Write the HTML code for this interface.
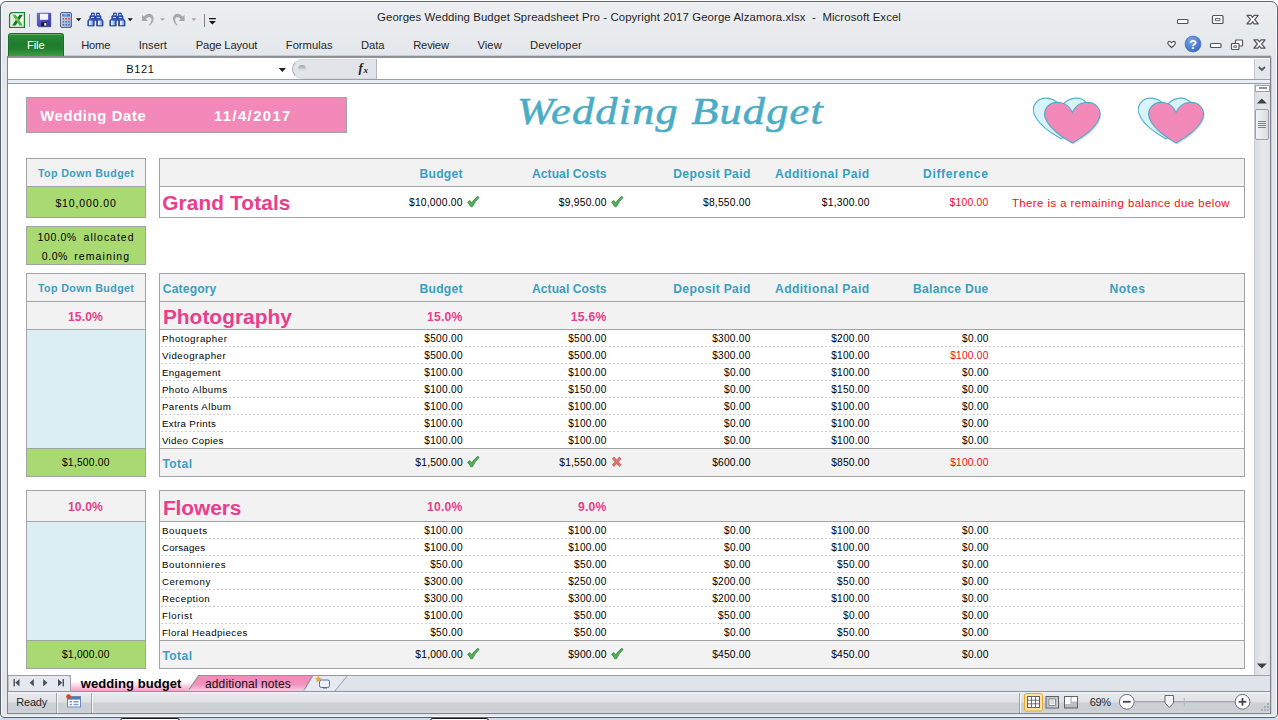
<!DOCTYPE html>
<html lang="en"><head><meta charset="utf-8"><title>Georges Wedding Budget Spreadsheet Pro - Microsoft Excel</title>
<style>
html,body{margin:0;padding:0;background:#fff;}
body{width:1278px;height:720px;position:relative;overflow:hidden;font-family:"Liberation Sans",sans-serif;}
#app div,#app svg.a,#app span.t{position:absolute;}
span.t{white-space:nowrap;display:block;}
</style></head>
<body><div id="app">
<div style="left:0px;top:1px;width:1278px;height:717px;background:linear-gradient(#eceef1 0px,#e8ebee 30px,#e3e6ea 56px,#e3e6ea 100%);border:1px solid #59626c;border-radius:6px 7px 4px 4px;box-sizing:border-box;box-shadow:inset 0 0 0 1px #f7f8fa;"></div>
<div style="left:7px;top:56px;width:1264px;height:658px;box-sizing:border-box;border:1px solid #7f848c;border-top:none;background:#fff;"></div>
<div style="left:1271px;top:57px;width:1px;height:657px;background:#c9ccd1;"></div>
<div style="left:0px;top:718px;width:1278px;height:2px;background:#cddbee;"></div>
<div style="left:8px;top:55px;width:1263px;height:1px;background:#c9ccd1;"></div>
<div style="left:8px;top:56px;width:1263px;height:2px;background:linear-gradient(#8a8e94,#92969c);"></div>
<span class="t" style="left:377.00px;top:11px;font:normal normal 11.4px/12px 'Liberation Sans', sans-serif;color:#1e1e1e;letter-spacing:0.092px;white-space:pre;">Georges Wedding Budget Spreadsheet Pro - Copyright 2017 George Alzamora.xlsx  -  Microsoft Excel</span>
<svg class="a" style="left:1160px;top:8px" width="112" height="46" viewBox="1160 8 112 46">
<g fill="#fff" stroke="#50555c" stroke-width="1.2" stroke-linejoin="round">
<rect x="1177.5" y="19.5" width="10.5" height="4" rx="1"/>
<rect x="1212.5" y="15.5" width="10.5" height="8" rx="1"/><rect x="1215.5" y="18.5" width="4.5" height="2.2" stroke-width=".9"/>
<path d="M1247 15.300h4l1.600 2.200 1.600-2.200h4l-3.500 4.300 3.500 4.300h-4l-1.600-2.200-1.600 2.200h-4l3.500-4.300z"/>
<path d="M1168.100 42q1.900-1.400 3.500.8 1.600-2.200 3.500-.8.900 1.300-.5 2.700l-3 2.800-3-2.800q-1.400-1.400-.5-2.700z" stroke-width="1.200"/>
<rect x="1210.500" y="43.500" width="10.500" height="4" rx="1"/>
<rect x="1235.500" y="40" width="7" height="6" rx=".8"/><rect x="1231.500" y="43.500" width="7.500" height="6" rx=".8"/><rect x="1233.800" y="45.800" width="2.800" height="1.600" stroke-width=".8"/>
<path d="M1253.900 39.800h4l1.600 2.200 1.600-2.200h4l-3.500 4.200 3.500 4.200h-4l-1.600-2.200-1.600 2.200h-4l3.500-4.200z"/>
</g>
<defs><radialGradient id="hg" cx=".4" cy=".3" r=".8"><stop offset="0" stop-color="#7fa6e6"/><stop offset="1" stop-color="#2f62c0"/></radialGradient></defs>
<circle cx="1193" cy="44" r="8" fill="url(#hg)" stroke="#3c6cc4" stroke-width=".6"/>
</svg>
<span class="t" style="left:1189.18px;top:38px;font:normal bold 12.5px/14px 'Liberation Sans', sans-serif;color:#fff;">?</span>
<svg class="a" style="left:8px;top:10px" width="212" height="20" viewBox="8 10 212 20">
<!-- excel icon -->
<path d="M12.500 12.600H24.400V27.400H9.600V15.500Q9.600 12.600 12.500 12.600z" fill="#fafdf9" stroke="#1f7f2b" stroke-width="1.300"/>
<path d="M10.600 16v10.400h12.800z" fill="#cfeecd" opacity=".7"/>
<path d="M19.500 14.700h3.400L15.500 25.500h-3.400z" fill="#14732f"/>
<path d="M12.300 14.700h3.500L22.900 25.500h-3.500z" fill="#4cb748"/>
<path d="M16.300 18.600l1.300 1.900" stroke="#b5d334" stroke-width="1.500"/>
<rect x="29" y="14" width="1" height="13" fill="#9a9ea5"/>
<!-- save -->
<defs><linearGradient id="sv" x1="0" y1="0" x2="1" y2="1"><stop offset="0" stop-color="#7474e0"/><stop offset=".5" stop-color="#4a4cc0"/><stop offset="1" stop-color="#2f2f94"/></linearGradient></defs>
<path d="M37.300 13.200H50.800V26.800H38.600L37.300 25.500z" fill="url(#sv)" stroke="#35359c" stroke-width=".6"/>
<rect x="40" y="13.800" width="8.200" height="6" fill="#f4f6fc"/>
<rect x="41.300" y="22.300" width="5.600" height="3.900" fill="#15152a"/><rect x="44.200" y="23" width="2.200" height="2.700" fill="#dfe6f5"/>
<!-- calculator -->
<defs><linearGradient id="cg" x1="0" y1="0" x2="1" y2="1"><stop offset="0" stop-color="#dbe9fa"/><stop offset="1" stop-color="#98a7bf"/></linearGradient></defs>
<rect x="60.500" y="12.500" width="11" height="15" rx="1.500" fill="url(#cg)" stroke="#55647f" stroke-width="1"/>
<rect x="62" y="13.800" width="8" height="2.700" fill="#3f79dc"/><rect x="63.500" y="14.500" width="4" height=".8" fill="#cfe2ff"/>
<g fill="#d8453a"><rect x="62.500" y="17.900" width="1.700" height="1.700"/><rect x="65.300" y="17.900" width="1.700" height="1.700"/><rect x="68.100" y="17.900" width="1.700" height="1.700"/></g>
<g fill="#4f79c6"><rect x="62.500" y="20.900" width="1.700" height="1.700"/><rect x="65.300" y="20.900" width="1.700" height="1.700"/><rect x="68.100" y="20.900" width="1.700" height="1.700"/><rect x="62.500" y="23.900" width="1.700" height="1.700"/><rect x="65.300" y="23.900" width="1.700" height="1.700"/><rect x="68.100" y="23.900" width="1.700" height="1.700"/></g>
<path d="M76 18.300h5.200l-2.600 3z" fill="#111"/>
<!-- binoculars 1 -->
<defs><linearGradient id="bg1" x1="0" y1="0" x2="1" y2="0"><stop offset="0" stop-color="#fff"/><stop offset="1" stop-color="#7f9be0"/></linearGradient></defs>
<g id="bino"><path d="M91.500 13h2.900v2.300l.9 .8v3.300l-1.100 .9v5.700h-6.400v-5.500l2-1.900v-2.600l1.700-1z" fill="#3156b8" stroke="#1b3588" stroke-width=".7"/>
<path d="M99.300 13h-2.900v2.300l-.9 .8v3.300l1.100 .9v5.700h6.400v-5.500l-2-1.900v-2.600l-1.700-1z" fill="#3156b8" stroke="#1b3588" stroke-width=".7"/>
<rect x="94" y="18.300" width="3" height="2.400" fill="#2a49a8"/>
<rect x="89" y="20.600" width="3.900" height="4.600" fill="url(#bg1)"/><rect x="98" y="20.600" width="3.900" height="4.600" fill="url(#bg1)"/>
<rect x="92.200" y="14" width="1.500" height="1.300" fill="#e3eaff"/><rect x="97.200" y="14" width="1.500" height="1.300" fill="#e3eaff"/>
<rect x="91" y="17" width="3" height=".9" fill="#c9d6fb"/><rect x="96.800" y="17" width="3" height=".9" fill="#c9d6fb"/></g>
<use href="#bino" x="22"/>
<path d="M127.600 18.300h5.200l-2.600 3z" fill="#111"/>
<!-- undo / redo (disabled) -->
<path d="M142 14.700V21h5.800l-1.900-1.900c1.600-2.100 4.600-2.600 5.400-.6.700 2-.3 4.500-2.500 6.800l1 .3c3.200-2.600 4.500-6.100 3.500-8.800-1.300-3.600-6.300-4.200-9.300 0z" fill="#a4a8ae"/>
<path d="M160 18.300h5l-2.500 2.800z" fill="#a4a8ae"/>
<path transform="translate(326.600 0) scale(-1 1)" d="M142 14.700V21h5.800l-1.900-1.900c1.600-2.100 4.600-2.600 5.400-.6.700 2-.3 4.500-2.500 6.800l1 .3c3.200-2.600 4.500-6.100 3.500-8.800-1.300-3.600-6.300-4.200-9.300 0z" fill="#a4a8ae"/>
<path d="M191.300 18.300h5l-2.500 2.800z" fill="#a4a8ae"/>
<rect x="204" y="14" width="1" height="13" fill="#7f848c"/>
<rect x="209" y="18" width="6.800" height="1.300" fill="#111"/><path d="M209 21h6.800l-3.400 3.400z" fill="#111"/>
</svg>
<div style="left:8px;top:33px;width:56px;height:23px;background:linear-gradient(#2e8b3a 0%,#1f7a2c 45%,#238232 70%,#3f9d3f 100%);border:1px solid #1b6e27;border-bottom:none;border-radius:3px 3px 0 0;box-sizing:border-box;box-shadow:inset 0 1px 0 #5fb066;"></div>
<span class="t" style="left:27.00px;top:39px;font:normal normal 11.2px/12px 'Liberation Sans', sans-serif;color:#fff;letter-spacing:-0.108px;">File</span>
<span class="t" style="left:81.20px;top:39px;font:normal normal 11.2px/12px 'Liberation Sans', sans-serif;color:#262626;letter-spacing:-0.186px;">Home</span>
<span class="t" style="left:138.70px;top:39px;font:normal normal 11.2px/12px 'Liberation Sans', sans-serif;color:#262626;letter-spacing:0.053px;">Insert</span>
<span class="t" style="left:195.70px;top:39px;font:normal normal 11.2px/12px 'Liberation Sans', sans-serif;color:#262626;letter-spacing:-0.112px;">Page Layout</span>
<span class="t" style="left:285.80px;top:39px;font:normal normal 11.2px/12px 'Liberation Sans', sans-serif;color:#262626;letter-spacing:0.009px;">Formulas</span>
<span class="t" style="left:361.00px;top:39px;font:normal normal 11.2px/12px 'Liberation Sans', sans-serif;color:#262626;letter-spacing:-0.035px;">Data</span>
<span class="t" style="left:413.20px;top:39px;font:normal normal 11.2px/12px 'Liberation Sans', sans-serif;color:#262626;letter-spacing:-0.181px;">Review</span>
<span class="t" style="left:477.50px;top:39px;font:normal normal 11.2px/12px 'Liberation Sans', sans-serif;color:#262626;letter-spacing:0.063px;">View</span>
<span class="t" style="left:530.00px;top:39px;font:normal normal 11.2px/12px 'Liberation Sans', sans-serif;color:#262626;letter-spacing:0.089px;">Developer</span>
<div style="left:8px;top:58px;width:1246px;height:21px;background:#fff;"></div>
<div style="left:8px;top:79px;width:1262px;height:1px;background:#9a9ea6;"></div>
<div style="left:8px;top:80px;width:1262px;height:3px;background:#e9edf8;"></div>
<div style="left:8px;top:83px;width:1262px;height:1px;background:#9a9ea6;"></div>
<span class="t" style="left:126.30px;top:63px;font:normal normal 11px/12px 'Liberation Sans', sans-serif;color:#111;letter-spacing:0.624px;">B121</span>
<svg class="a" style="left:277px;top:66px" width="10" height="8"><path d="M1.700 2h7.200l-3.600 4z" fill="#222"/></svg>
<div style="left:292px;top:59px;width:85px;height:20px;background:#e1e4e9;border-radius:10px 0 0 10px;border:1px solid #a9adb4;border-right:none;border-top-color:#d5d8dd;border-bottom-color:#d5d8dd;box-sizing:border-box;"></div>
<div style="left:297.5px;top:64.8px;width:8px;height:8px;border-radius:50%;background:linear-gradient(#9a9da3,#d4d6da 55%,#f0f1f3);"></div>
<div style="left:376px;top:59px;width:1px;height:20px;background:#b4b8be;"></div>
<span class="t" style="left:358.50px;top:60px;font:italic bold 13px/15px 'Liberation Serif', serif;color:#222;">f</span>
<span class="t" style="left:363.50px;top:65px;font:italic bold 9px/10px 'Liberation Serif', serif;color:#222;">x</span>
<div style="left:1254px;top:59px;width:16px;height:20px;background:#e3e6ea;border-left:1px solid #c3c7cd;box-sizing:border-box;"></div>
<svg class="a" style="left:1256px;top:63px" width="12" height="12"><path d="M2.800 4l3.100 3 3.100-3" fill="none" stroke="#555a61" stroke-width="1.800"/></svg>
<div style="left:1254px;top:84px;width:16px;height:591px;background:linear-gradient(90deg,#d9dce1,#e6e8ec 50%,#dfe2e6);border-left:1px solid #c8ccd2;box-sizing:border-box;"></div>
<div style="left:1255px;top:85px;width:15px;height:7px;background:#fdfdfe;border:1px solid #9da2aa;box-sizing:border-box;"></div>
<div style="left:1259px;top:87px;width:8px;height:1.5px;background:#8f949c;"></div>
<svg class="a" style="left:1255px;top:96px" width="14" height="10"><path d="M1.800 7.400l5-5 5 5z" fill="#3d4148"/></svg>
<div style="left:1255px;top:109px;width:14px;height:31px;background:linear-gradient(90deg,#f3f4f6,#e3e5e9 60%,#d9dce1);border:1px solid #9a9fa7;border-radius:2px;box-sizing:border-box;"></div>
<div style="left:1258px;top:121px;width:8px;height:1px;background:#7d828a;"></div>
<div style="left:1258px;top:123px;width:8px;height:1px;background:#7d828a;"></div>
<div style="left:1258px;top:125px;width:8px;height:1px;background:#7d828a;"></div>
<div style="left:1258px;top:127px;width:8px;height:1px;background:#7d828a;"></div>
<svg class="a" style="left:1255px;top:661px" width="14" height="10"><path d="M1.800 2.600l5 5 5-5z" fill="#3d4148"/></svg>
<div style="left:8px;top:675px;width:1262px;height:17px;background:#dfe3ea;border-top:1px solid #9ca1a9;box-sizing:border-box;"></div>
<svg class="a" style="left:8px;top:674px" width="350" height="18" viewBox="8 674 350 18">
<defs><linearGradient id="pk" x1="0" y1="0" x2="0" y2="1"><stop offset="0" stop-color="#f38bb9"/><stop offset=".55" stop-color="#f590bc"/><stop offset="1" stop-color="#fbd0e2"/></linearGradient>
<linearGradient id="wt" x1="0" y1="0" x2="0" y2="1"><stop offset="0" stop-color="#fff"/><stop offset=".4" stop-color="#fff"/><stop offset="1" stop-color="#f6a0c5"/></linearGradient></defs>
<path d="M8 675.500H68q2.500 0 2.500 2.500V691.500H8z" fill="#e5e8ee" stroke="#9a9fa7" stroke-width="1"/>
<g fill="#4a4f57"><rect x="13.500" y="679" width="1.400" height="7.400"/><path d="M19.500 679v7.400l-4.200-3.700z"/><path d="M33.800 679v7.400l-4.200-3.700z"/><path d="M43.200 679v7.400l4.200-3.700z"/><path d="M58 679v7.400l4.200-3.700z"/><rect x="62.600" y="679" width="1.400" height="7.400"/></g>
<path d="M303.500 691.500l9.500-16h34.500l-13 16z" fill="#e6e9ef" stroke="#8d929a" stroke-width=".9"/>
<path d="M188 691.500l11-16h113.500l-9.500 16z" fill="url(#pk)" stroke="#8d929a" stroke-width=".9"/>
<path d="M71 674.500V691h116.500l11-16.500z" fill="url(#wt)"/>
<path d="M71 675h127.500" stroke="#fff" stroke-width="1.200"/>
<path d="M187.500 691.500l11-16" stroke="#8d929a" stroke-width=".9" fill="none"/>
<path d="M185.500 691.500l2.500-3.500 1.500 3.500z" fill="#c9cdd3"/><path d="M301.500 691.500l2.500-3.500 1.500 3.500z" fill="#c9cdd3"/>
<g><rect x="319.500" y="680" width="10" height="7.500" rx="1.800" fill="#eef3ff" stroke="#4f6db0" stroke-width="1"/><rect x="323" y="687.500" width="4" height="1" fill="#4f6db0"/><path d="M318.500 676.300l.8 1.900 2 .2-1.500 1.400.5 2-1.800-1.100-1.800 1.100.5-2-1.500-1.400 2-.2z" fill="#f6b21a" stroke="#d38f0a" stroke-width=".4"/></g>
</svg>
<span class="t" style="left:80.80px;top:676px;font:normal bold 13px/15px 'Liberation Sans', sans-serif;color:#000;letter-spacing:0.075px;">wedding budget</span>
<span class="t" style="left:205.00px;top:677px;font:normal normal 12px/14px 'Liberation Sans', sans-serif;color:#111;letter-spacing:0.120px;">additional notes</span>
<div style="left:8px;top:691px;width:1262px;height:23px;background:linear-gradient(#f4f5f7 0,#e6e8eb 2px,#dfe2e5 10px,#cdd0d5 11px,#cbced3 18px,#d3d6da 100%);border-top:1px solid #8e939b;border-bottom:1px solid #7e848c;box-sizing:border-box;"></div>
<span class="t" style="left:16.30px;top:696px;font:normal normal 11px/12px 'Liberation Sans', sans-serif;color:#262626;letter-spacing:-0.219px;">Ready</span>
<div style="left:56px;top:693px;width:1px;height:20px;background:#a1a6ae;"></div>
<div style="left:57px;top:693px;width:1px;height:20px;background:#f4f5f7;"></div>
<div style="left:91px;top:693px;width:1px;height:20px;background:#a1a6ae;"></div>
<div style="left:92px;top:693px;width:1px;height:20px;background:#f4f5f7;"></div>
<svg class="a" style="left:65px;top:693px" width="18" height="16" viewBox="65 693 18 16">
<rect x="67.500" y="696.500" width="13" height="10.500" fill="#fff" stroke="#6e86b4" stroke-width="1"/><rect x="68" y="697" width="12" height="2.600" fill="#4f78c4"/>
<g fill="#7f9bd0"><rect x="69.500" y="701" width="2.500" height="1.500"/><rect x="73.500" y="701" width="5" height="1.500"/><rect x="69.500" y="703.800" width="2.500" height="1.500"/><rect x="73.500" y="703.800" width="5" height="1.500"/></g>
<circle cx="68.500" cy="696.500" r="2.300" fill="#d8412f"/></svg>
<div style="left:1019px;top:693px;width:1px;height:20px;background:#a1a6ae;"></div>
<div style="left:1020px;top:693px;width:1px;height:20px;background:#f4f5f7;"></div>
<svg class="a" style="left:1022px;top:692px" width="250" height="22" viewBox="1022 692 250 22">
<rect x="1024.500" y="693.500" width="18" height="17.500" rx="2" fill="#fbe3a0" stroke="#e8a63c" stroke-width="1"/>
<rect x="1027.500" y="696.500" width="12" height="11" fill="#fff" stroke="#5d626a" stroke-width="1"/><path d="M1027.500 700.200h12M1027.500 703.800h12M1031.500 696.500v11M1035.500 696.500v11" stroke="#5d626a" stroke-width=".9"/>
<rect x="1046" y="696.500" width="12.500" height="11.500" fill="#c5c9cf" stroke="#5d626a" stroke-width="1"/><rect x="1049" y="699" width="6.500" height="6.500" fill="#fff" stroke="#5d626a" stroke-width=".7"/><path d="M1050.500 701h3.500M1050.500 703h3.500" stroke="#7b8088" stroke-width=".6"/>
<rect x="1064.500" y="696.500" width="13" height="11.500" fill="#b8bcc3" stroke="#5d626a" stroke-width="1"/><path d="M1065 697h5.300v7h-5.300zM1071.800 697h5.200v4.500h-5.200z" fill="#fff"/>
<circle cx="1126.800" cy="701.800" r="7.400" fill="#fbfbfc" stroke="#6a6f77" stroke-width="1"/><rect x="1123" y="700.900" width="7.600" height="1.800" fill="#41454c"/>
<rect x="1134.500" y="701.300" width="100.500" height="1" fill="#8b9098"/>
<rect x="1183.800" y="698" width="1" height="8" fill="#aeb3ba"/>
<path d="M1165 695.500h8.500v7.500l-4.250 4.500-4.250-4.500z" fill="#f2f3f5" stroke="#62676f" stroke-width="1"/>
<circle cx="1242.500" cy="701.800" r="7.400" fill="#fbfbfc" stroke="#6a6f77" stroke-width="1"/><rect x="1238.700" y="700.900" width="7.600" height="1.800" fill="#41454c"/><rect x="1241.600" y="698" width="1.800" height="7.600" fill="#41454c"/>
<g fill="#a9aeb6"><rect x="1267" y="703" width="2" height="2"/><rect x="1264" y="706" width="2" height="2"/><rect x="1267" y="706" width="2" height="2"/><rect x="1261" y="709" width="2" height="2"/><rect x="1264" y="709" width="2" height="2"/><rect x="1267" y="709" width="2" height="2"/></g>
</svg>
<span class="t" style="left:1089.80px;top:696px;font:normal normal 11px/12px 'Liberation Sans', sans-serif;color:#262626;letter-spacing:-0.444px;">69%</span>
<div style="left:120px;top:718px;width:60px;height:3px;background:#fff;border:1px solid #1a1a1a;border-radius:3px 3px 0 0;box-sizing:border-box;"></div>
<div style="left:430px;top:718px;width:59px;height:3px;background:#fff;border:1px solid #1a1a1a;border-radius:3px 3px 0 0;box-sizing:border-box;"></div>
<div style="left:26px;top:97px;width:321px;height:36px;background:#f389b8;border:1px solid #a3a3a3;box-sizing:border-box;"></div>
<span class="t" style="left:40.20px;top:108px;font:normal bold 14.8px/16px 'Liberation Sans', sans-serif;color:#fff;letter-spacing:0.659px;">Wedding Date</span>
<span class="t" style="left:214.00px;top:108px;font:normal bold 14.8px/16px 'Liberation Sans', sans-serif;color:#fff;letter-spacing:1.409px;">11/4/2017</span>
<span class="t" style="left:516.50px;top:90px;font:italic normal 38.5px/42px 'Liberation Serif', serif;color:#4bacc6;letter-spacing:1.068px;transform:scaleX(1.15);transform-origin:0 0;-webkit-text-stroke:.55px #4bacc6;">Wedding Budget</span>
<svg class="a" style="left:1030px;top:94px" width="74" height="54" viewBox="1030 94 74 54">
<path d="M1062.30 109.45C1073.76 85.53 1118.45 109.45 1062.30 140.20C1006.15 109.45 1050.84 85.53 1062.30 109.45Z" fill="#9aa" opacity=".25"/>
<path d="M1061.10 107.95C1072.56 84.03 1117.25 107.95 1061.10 138.70C1004.95 107.95 1049.64 84.03 1061.10 107.95Z" fill="#d9f3fb" stroke="#55b0d0" stroke-width="1.1"/>
<path d="M1073.50 113.65C1084.96 89.73 1129.65 113.65 1073.50 144.40C1017.35 113.65 1062.04 89.73 1073.50 113.65Z" fill="#889" opacity=".3"/>
<path d="M1072.30 112.15C1083.76 88.23 1128.45 112.15 1072.30 142.90C1016.15 112.15 1060.84 88.23 1072.30 112.15Z" fill="#f389b8" stroke="#4fa9c8" stroke-width="1.1"/>
</svg>
<svg class="a" style="left:1135px;top:94px" width="72" height="54" viewBox="1135 94 72 54">
<path d="M1166.90 109.45C1178.23 85.53 1222.43 109.45 1166.90 140.20C1111.37 109.45 1155.57 85.53 1166.90 109.45Z" fill="#9aa" opacity=".25"/>
<path d="M1165.70 107.95C1177.03 84.03 1221.23 107.95 1165.70 138.70C1110.17 107.95 1154.37 84.03 1165.70 107.95Z" fill="#d9f3fb" stroke="#55b0d0" stroke-width="1.1"/>
<path d="M1177.30 113.65C1188.63 89.73 1232.83 113.65 1177.30 144.40C1121.77 113.65 1165.97 89.73 1177.30 113.65Z" fill="#889" opacity=".3"/>
<path d="M1176.10 112.15C1187.43 88.23 1231.63 112.15 1176.10 142.90C1120.57 112.15 1164.77 88.23 1176.10 112.15Z" fill="#f389b8" stroke="#4fa9c8" stroke-width="1.1"/>
</svg>
<div style="left:26px;top:158px;width:120px;height:29px;background:#f2f2f2;border:1px solid #a3a3a3;box-sizing:border-box;"></div>
<div style="left:26px;top:186px;width:120px;height:32px;background:#a9d971;border:1px solid #a3a3a3;box-sizing:border-box;"></div>
<span class="t" style="left:38.00px;top:167px;font:normal bold 10.7px/12px 'Liberation Sans', sans-serif;color:#389fc1;letter-spacing:0.378px;">Top Down Budget</span>
<span class="t" style="left:55.40px;top:197px;font:normal normal 10.5px/12px 'Liberation Sans', sans-serif;color:#000;letter-spacing:0.864px;">$10,000.00</span>
<div style="left:26px;top:226px;width:120px;height:39px;background:#a9d971;border:1px solid #a3a3a3;box-sizing:border-box;"></div>
<span class="t" style="left:37.60px;top:231px;font:normal normal 10.5px/12px 'Liberation Sans', sans-serif;color:#000;letter-spacing:0.596px;">100.0%</span>
<span class="t" style="left:83.60px;top:231px;font:normal normal 10.5px/12px 'Liberation Sans', sans-serif;color:#000;letter-spacing:0.985px;">allocated</span>
<span class="t" style="left:41.80px;top:250px;font:normal normal 10.5px/12px 'Liberation Sans', sans-serif;color:#000;letter-spacing:0.541px;">0.0%</span>
<span class="t" style="left:74.20px;top:250px;font:normal normal 10.5px/12px 'Liberation Sans', sans-serif;color:#000;letter-spacing:1.099px;">remaining</span>
<div style="left:159px;top:158px;width:1086px;height:29px;background:#f2f2f2;border:1px solid #a3a3a3;box-sizing:border-box;"></div>
<div style="left:159px;top:186px;width:1086px;height:32px;background:#fff;border:1px solid #a3a3a3;box-sizing:border-box;"></div>
<span class="t" style="left:419.50px;top:167px;font:normal bold 12.1px/14px 'Liberation Sans', sans-serif;color:#389fc1;letter-spacing:0.274px;">Budget</span>
<span class="t" style="left:532.00px;top:167px;font:normal bold 12.1px/14px 'Liberation Sans', sans-serif;color:#389fc1;letter-spacing:0.057px;">Actual Costs</span>
<span class="t" style="left:673.30px;top:167px;font:normal bold 12.1px/14px 'Liberation Sans', sans-serif;color:#389fc1;letter-spacing:0.338px;">Deposit Paid</span>
<span class="t" style="left:775.00px;top:167px;font:normal bold 12.1px/14px 'Liberation Sans', sans-serif;color:#389fc1;letter-spacing:0.438px;">Additional Paid</span>
<span class="t" style="left:923.00px;top:167px;font:normal bold 12.1px/14px 'Liberation Sans', sans-serif;color:#389fc1;letter-spacing:0.644px;">Difference</span>
<span class="t" style="left:162.30px;top:191px;font:normal bold 20.8px/23px 'Liberation Sans', sans-serif;color:#e83e8c;letter-spacing:0.122px;">Grand Totals</span>
<span class="t" style="left:409.00px;top:197px;font:normal normal 10.3px/11px 'Liberation Sans', sans-serif;color:#000;letter-spacing:0.205px;">$10,000.00</span>
<span class="t" style="left:558.80px;top:197px;font:normal normal 10.3px/11px 'Liberation Sans', sans-serif;color:#000;letter-spacing:0.221px;">$9,950.00</span>
<span class="t" style="left:703.00px;top:197px;font:normal normal 10.3px/11px 'Liberation Sans', sans-serif;color:#000;letter-spacing:0.199px;">$8,550.00</span>
<span class="t" style="left:821.80px;top:197px;font:normal normal 10.3px/11px 'Liberation Sans', sans-serif;color:#000;letter-spacing:0.221px;">$1,300.00</span>
<span class="t" style="left:949.50px;top:197px;font:normal normal 10.3px/11px 'Liberation Sans', sans-serif;color:#fa0a10;letter-spacing:0.267px;">$100.00</span>
<span class="t" style="left:1012.00px;top:197px;font:normal normal 11.3px/12px 'Liberation Sans', sans-serif;color:#fa0a10;letter-spacing:0.465px;">There is a remaining balance due below</span>
<svg class="a" style="left:467px;top:196px" width="13" height="12" viewBox="0 0 13 12"><path d="M.5 6.200l2.500-1.700 1.700 2.200Q7.400 2.800 10.800 .3l1.300 1.200Q8.300 5 5.600 10.600l-1.800.2Q2.500 8.200 .5 6.200z" fill="#4fae55" stroke="#2f8538" stroke-width=".7"/></svg>
<svg class="a" style="left:610.7px;top:196px" width="13" height="12" viewBox="0 0 13 12"><path d="M.5 6.200l2.500-1.700 1.700 2.200Q7.400 2.800 10.800 .3l1.300 1.200Q8.300 5 5.600 10.600l-1.800.2Q2.500 8.200 .5 6.200z" fill="#4fae55" stroke="#2f8538" stroke-width=".7"/></svg>
<div style="left:26px;top:273px;width:120px;height:29px;background:#f2f2f2;border:1px solid #a3a3a3;box-sizing:border-box;"></div>
<div style="left:159px;top:273px;width:1086px;height:29px;background:#f2f2f2;border:1px solid #a3a3a3;box-sizing:border-box;"></div>
<span class="t" style="left:38.00px;top:282px;font:normal bold 10.7px/12px 'Liberation Sans', sans-serif;color:#389fc1;letter-spacing:0.378px;">Top Down Budget</span>
<span class="t" style="left:162.80px;top:282px;font:normal bold 12.1px/14px 'Liberation Sans', sans-serif;color:#389fc1;letter-spacing:0.160px;">Category</span>
<span class="t" style="left:419.50px;top:282px;font:normal bold 12.1px/14px 'Liberation Sans', sans-serif;color:#389fc1;letter-spacing:0.274px;">Budget</span>
<span class="t" style="left:532.00px;top:282px;font:normal bold 12.1px/14px 'Liberation Sans', sans-serif;color:#389fc1;letter-spacing:0.057px;">Actual Costs</span>
<span class="t" style="left:673.30px;top:282px;font:normal bold 12.1px/14px 'Liberation Sans', sans-serif;color:#389fc1;letter-spacing:0.338px;">Deposit Paid</span>
<span class="t" style="left:775.00px;top:282px;font:normal bold 12.1px/14px 'Liberation Sans', sans-serif;color:#389fc1;letter-spacing:0.438px;">Additional Paid</span>
<span class="t" style="left:913.00px;top:282px;font:normal bold 12.1px/14px 'Liberation Sans', sans-serif;color:#389fc1;letter-spacing:0.273px;">Balance Due</span>
<span class="t" style="left:1109.50px;top:282px;font:normal bold 12.1px/14px 'Liberation Sans', sans-serif;color:#389fc1;letter-spacing:0.478px;">Notes</span>
<div style="left:26px;top:301px;width:120px;height:29px;background:#f2f2f2;border:1px solid #a3a3a3;box-sizing:border-box;"></div>
<div style="left:26px;top:329px;width:120px;height:120px;background:#daeef3;border:1px solid #a3a3a3;box-sizing:border-box;"></div>
<div style="left:26px;top:448px;width:120px;height:29px;background:#a9d971;border:1px solid #a3a3a3;box-sizing:border-box;"></div>
<div style="left:159px;top:301px;width:1086px;height:29px;background:#f2f2f2;border:1px solid #a3a3a3;box-sizing:border-box;"></div>
<div style="left:159px;top:329px;width:1086px;height:120px;background:#fff;border:1px solid #a3a3a3;box-sizing:border-box;"></div>
<div style="left:159px;top:448px;width:1086px;height:29px;background:#f2f2f2;border:1px solid #a3a3a3;box-sizing:border-box;"></div>
<div style="left:160px;top:346px;width:1084px;height:1px;background:repeating-linear-gradient(90deg,#fff 0 1px,#cfcfcf 1px 3px,#fff 3px 4px);"></div>
<div style="left:160px;top:363px;width:1084px;height:1px;background:repeating-linear-gradient(90deg,#fff 0 1px,#cfcfcf 1px 3px,#fff 3px 4px);"></div>
<div style="left:160px;top:380px;width:1084px;height:1px;background:repeating-linear-gradient(90deg,#fff 0 1px,#cfcfcf 1px 3px,#fff 3px 4px);"></div>
<div style="left:160px;top:397px;width:1084px;height:1px;background:repeating-linear-gradient(90deg,#fff 0 1px,#cfcfcf 1px 3px,#fff 3px 4px);"></div>
<div style="left:160px;top:414px;width:1084px;height:1px;background:repeating-linear-gradient(90deg,#fff 0 1px,#cfcfcf 1px 3px,#fff 3px 4px);"></div>
<div style="left:160px;top:431px;width:1084px;height:1px;background:repeating-linear-gradient(90deg,#fff 0 1px,#cfcfcf 1px 3px,#fff 3px 4px);"></div>
<span class="t" style="left:68.00px;top:310px;font:normal bold 12.2px/14px 'Liberation Sans', sans-serif;color:#e83e8c;letter-spacing:0.087px;">15.0%</span>
<span class="t" style="left:162.90px;top:305px;font:normal bold 20.9px/23px 'Liberation Sans', sans-serif;color:#e83e8c;letter-spacing:0.016px;">Photography</span>
<span class="t" style="left:427.00px;top:310px;font:normal bold 12.2px/14px 'Liberation Sans', sans-serif;color:#e83e8c;letter-spacing:0.208px;">15.0%</span>
<span class="t" style="left:570.80px;top:310px;font:normal bold 12.2px/14px 'Liberation Sans', sans-serif;color:#e83e8c;letter-spacing:0.248px;">15.6%</span>
<span class="t" style="left:161.90px;top:333px;font:normal normal 9.7px/11px 'Liberation Sans', sans-serif;color:#000;letter-spacing:0.582px;">Photographer</span>
<span class="t" style="left:424.25px;top:333px;font:normal normal 10.1px/11px 'Liberation Sans', sans-serif;color:#000;letter-spacing:0.293px;">$500.00</span>
<span class="t" style="left:568.15px;top:333px;font:normal normal 10.1px/11px 'Liberation Sans', sans-serif;color:#000;letter-spacing:0.293px;">$500.00</span>
<span class="t" style="left:712.15px;top:333px;font:normal normal 10.1px/11px 'Liberation Sans', sans-serif;color:#000;letter-spacing:0.293px;">$300.00</span>
<span class="t" style="left:831.15px;top:333px;font:normal normal 10.1px/11px 'Liberation Sans', sans-serif;color:#000;letter-spacing:0.293px;">$200.00</span>
<span class="t" style="left:962.01px;top:333px;font:normal normal 10.1px/11px 'Liberation Sans', sans-serif;color:#000;letter-spacing:0.284px;">$0.00</span>
<span class="t" style="left:161.90px;top:350px;font:normal normal 9.7px/11px 'Liberation Sans', sans-serif;color:#000;letter-spacing:0.533px;">Videographer</span>
<span class="t" style="left:424.25px;top:350px;font:normal normal 10.1px/11px 'Liberation Sans', sans-serif;color:#000;letter-spacing:0.293px;">$500.00</span>
<span class="t" style="left:568.15px;top:350px;font:normal normal 10.1px/11px 'Liberation Sans', sans-serif;color:#000;letter-spacing:0.293px;">$500.00</span>
<span class="t" style="left:712.15px;top:350px;font:normal normal 10.1px/11px 'Liberation Sans', sans-serif;color:#000;letter-spacing:0.293px;">$300.00</span>
<span class="t" style="left:831.15px;top:350px;font:normal normal 10.1px/11px 'Liberation Sans', sans-serif;color:#000;letter-spacing:0.293px;">$100.00</span>
<span class="t" style="left:950.15px;top:350px;font:normal normal 10.1px/11px 'Liberation Sans', sans-serif;color:#fa0a10;letter-spacing:0.293px;">$100.00</span>
<span class="t" style="left:161.90px;top:367px;font:normal normal 9.7px/11px 'Liberation Sans', sans-serif;color:#000;letter-spacing:0.396px;">Engagement</span>
<span class="t" style="left:424.25px;top:367px;font:normal normal 10.1px/11px 'Liberation Sans', sans-serif;color:#000;letter-spacing:0.293px;">$100.00</span>
<span class="t" style="left:568.15px;top:367px;font:normal normal 10.1px/11px 'Liberation Sans', sans-serif;color:#000;letter-spacing:0.293px;">$100.00</span>
<span class="t" style="left:724.01px;top:367px;font:normal normal 10.1px/11px 'Liberation Sans', sans-serif;color:#000;letter-spacing:0.284px;">$0.00</span>
<span class="t" style="left:831.15px;top:367px;font:normal normal 10.1px/11px 'Liberation Sans', sans-serif;color:#000;letter-spacing:0.293px;">$100.00</span>
<span class="t" style="left:962.01px;top:367px;font:normal normal 10.1px/11px 'Liberation Sans', sans-serif;color:#000;letter-spacing:0.284px;">$0.00</span>
<span class="t" style="left:161.90px;top:384px;font:normal normal 9.7px/11px 'Liberation Sans', sans-serif;color:#000;letter-spacing:0.493px;">Photo Albums</span>
<span class="t" style="left:424.25px;top:384px;font:normal normal 10.1px/11px 'Liberation Sans', sans-serif;color:#000;letter-spacing:0.293px;">$100.00</span>
<span class="t" style="left:568.15px;top:384px;font:normal normal 10.1px/11px 'Liberation Sans', sans-serif;color:#000;letter-spacing:0.293px;">$150.00</span>
<span class="t" style="left:724.01px;top:384px;font:normal normal 10.1px/11px 'Liberation Sans', sans-serif;color:#000;letter-spacing:0.284px;">$0.00</span>
<span class="t" style="left:831.15px;top:384px;font:normal normal 10.1px/11px 'Liberation Sans', sans-serif;color:#000;letter-spacing:0.293px;">$150.00</span>
<span class="t" style="left:962.01px;top:384px;font:normal normal 10.1px/11px 'Liberation Sans', sans-serif;color:#000;letter-spacing:0.284px;">$0.00</span>
<span class="t" style="left:161.90px;top:401px;font:normal normal 9.7px/11px 'Liberation Sans', sans-serif;color:#000;letter-spacing:0.491px;">Parents Album</span>
<span class="t" style="left:424.25px;top:401px;font:normal normal 10.1px/11px 'Liberation Sans', sans-serif;color:#000;letter-spacing:0.293px;">$100.00</span>
<span class="t" style="left:568.15px;top:401px;font:normal normal 10.1px/11px 'Liberation Sans', sans-serif;color:#000;letter-spacing:0.293px;">$100.00</span>
<span class="t" style="left:724.01px;top:401px;font:normal normal 10.1px/11px 'Liberation Sans', sans-serif;color:#000;letter-spacing:0.284px;">$0.00</span>
<span class="t" style="left:831.15px;top:401px;font:normal normal 10.1px/11px 'Liberation Sans', sans-serif;color:#000;letter-spacing:0.293px;">$100.00</span>
<span class="t" style="left:962.01px;top:401px;font:normal normal 10.1px/11px 'Liberation Sans', sans-serif;color:#000;letter-spacing:0.284px;">$0.00</span>
<span class="t" style="left:161.90px;top:418px;font:normal normal 9.7px/11px 'Liberation Sans', sans-serif;color:#000;letter-spacing:0.360px;">Extra Prints</span>
<span class="t" style="left:424.25px;top:418px;font:normal normal 10.1px/11px 'Liberation Sans', sans-serif;color:#000;letter-spacing:0.293px;">$100.00</span>
<span class="t" style="left:568.15px;top:418px;font:normal normal 10.1px/11px 'Liberation Sans', sans-serif;color:#000;letter-spacing:0.293px;">$100.00</span>
<span class="t" style="left:724.01px;top:418px;font:normal normal 10.1px/11px 'Liberation Sans', sans-serif;color:#000;letter-spacing:0.284px;">$0.00</span>
<span class="t" style="left:831.15px;top:418px;font:normal normal 10.1px/11px 'Liberation Sans', sans-serif;color:#000;letter-spacing:0.293px;">$100.00</span>
<span class="t" style="left:962.01px;top:418px;font:normal normal 10.1px/11px 'Liberation Sans', sans-serif;color:#000;letter-spacing:0.284px;">$0.00</span>
<span class="t" style="left:161.90px;top:435px;font:normal normal 9.7px/11px 'Liberation Sans', sans-serif;color:#000;letter-spacing:0.371px;">Video Copies</span>
<span class="t" style="left:424.25px;top:435px;font:normal normal 10.1px/11px 'Liberation Sans', sans-serif;color:#000;letter-spacing:0.293px;">$100.00</span>
<span class="t" style="left:568.15px;top:435px;font:normal normal 10.1px/11px 'Liberation Sans', sans-serif;color:#000;letter-spacing:0.293px;">$100.00</span>
<span class="t" style="left:724.01px;top:435px;font:normal normal 10.1px/11px 'Liberation Sans', sans-serif;color:#000;letter-spacing:0.284px;">$0.00</span>
<span class="t" style="left:831.15px;top:435px;font:normal normal 10.1px/11px 'Liberation Sans', sans-serif;color:#000;letter-spacing:0.293px;">$100.00</span>
<span class="t" style="left:962.01px;top:435px;font:normal normal 10.1px/11px 'Liberation Sans', sans-serif;color:#000;letter-spacing:0.284px;">$0.00</span>
<span class="t" style="left:162.40px;top:457px;font:normal bold 12px/14px 'Liberation Sans', sans-serif;color:#389fc1;letter-spacing:0.464px;">Total</span>
<span class="t" style="left:415.35px;top:457px;font:normal normal 10.3px/11px 'Liberation Sans', sans-serif;color:#000;letter-spacing:0.182px;">$1,500.00</span>
<span class="t" style="left:559.25px;top:457px;font:normal normal 10.3px/11px 'Liberation Sans', sans-serif;color:#000;letter-spacing:0.182px;">$1,550.00</span>
<span class="t" style="left:712.14px;top:457px;font:normal normal 10.3px/11px 'Liberation Sans', sans-serif;color:#000;letter-spacing:0.190px;">$600.00</span>
<span class="t" style="left:831.14px;top:457px;font:normal normal 10.3px/11px 'Liberation Sans', sans-serif;color:#000;letter-spacing:0.190px;">$850.00</span>
<span class="t" style="left:950.14px;top:457px;font:normal normal 10.3px/11px 'Liberation Sans', sans-serif;color:#fa0a10;letter-spacing:0.190px;">$100.00</span>
<svg class="a" style="left:467px;top:456px" width="13" height="12" viewBox="0 0 13 12"><path d="M.5 6.200l2.500-1.700 1.700 2.200Q7.400 2.800 10.800 .3l1.300 1.200Q8.300 5 5.600 10.600l-1.800.2Q2.500 8.200 .5 6.200z" fill="#4fae55" stroke="#2f8538" stroke-width=".7"/></svg>
<svg class="a" style="left:611.2px;top:456.4px" width="13" height="12" viewBox="0 0 13 12"><path d="M1.200 2.800l1.800-1.700 2.700 2.800 2.700-2.800 1.800 1.700-2.800 3 2.800 3-1.800 1.700-2.700-2.800-2.700 2.800-1.800-1.700 2.800-3z" fill="#e2736b" stroke="#c0504d" stroke-width=".6"/></svg>
<span class="t" style="left:61.90px;top:457px;font:normal normal 10.3px/11px 'Liberation Sans', sans-serif;color:#000;letter-spacing:0.232px;">$1,500.00</span>
<div style="left:26px;top:490px;width:120px;height:32px;background:#f2f2f2;border:1px solid #a3a3a3;box-sizing:border-box;"></div>
<div style="left:26px;top:521px;width:120px;height:120px;background:#daeef3;border:1px solid #a3a3a3;box-sizing:border-box;"></div>
<div style="left:26px;top:640px;width:120px;height:29px;background:#a9d971;border:1px solid #a3a3a3;box-sizing:border-box;"></div>
<div style="left:159px;top:490px;width:1086px;height:32px;background:#f2f2f2;border:1px solid #a3a3a3;box-sizing:border-box;"></div>
<div style="left:159px;top:521px;width:1086px;height:120px;background:#fff;border:1px solid #a3a3a3;box-sizing:border-box;"></div>
<div style="left:159px;top:640px;width:1086px;height:29px;background:#f2f2f2;border:1px solid #a3a3a3;box-sizing:border-box;"></div>
<div style="left:160px;top:538px;width:1084px;height:1px;background:repeating-linear-gradient(90deg,#fff 0 1px,#cfcfcf 1px 3px,#fff 3px 4px);"></div>
<div style="left:160px;top:555px;width:1084px;height:1px;background:repeating-linear-gradient(90deg,#fff 0 1px,#cfcfcf 1px 3px,#fff 3px 4px);"></div>
<div style="left:160px;top:572px;width:1084px;height:1px;background:repeating-linear-gradient(90deg,#fff 0 1px,#cfcfcf 1px 3px,#fff 3px 4px);"></div>
<div style="left:160px;top:589px;width:1084px;height:1px;background:repeating-linear-gradient(90deg,#fff 0 1px,#cfcfcf 1px 3px,#fff 3px 4px);"></div>
<div style="left:160px;top:606px;width:1084px;height:1px;background:repeating-linear-gradient(90deg,#fff 0 1px,#cfcfcf 1px 3px,#fff 3px 4px);"></div>
<div style="left:160px;top:623px;width:1084px;height:1px;background:repeating-linear-gradient(90deg,#fff 0 1px,#cfcfcf 1px 3px,#fff 3px 4px);"></div>
<span class="t" style="left:68.00px;top:500px;font:normal bold 12.2px/14px 'Liberation Sans', sans-serif;color:#e83e8c;letter-spacing:0.087px;">10.0%</span>
<span class="t" style="left:162.90px;top:496px;font:normal bold 20.9px/23px 'Liberation Sans', sans-serif;color:#e83e8c;letter-spacing:-0.065px;">Flowers</span>
<span class="t" style="left:427.00px;top:500px;font:normal bold 12.2px/14px 'Liberation Sans', sans-serif;color:#e83e8c;letter-spacing:0.208px;">10.0%</span>
<span class="t" style="left:578.00px;top:500px;font:normal bold 12.2px/14px 'Liberation Sans', sans-serif;color:#e83e8c;letter-spacing:0.205px;">9.0%</span>
<span class="t" style="left:161.90px;top:525px;font:normal normal 9.7px/11px 'Liberation Sans', sans-serif;color:#000;letter-spacing:0.620px;">Bouquets</span>
<span class="t" style="left:424.25px;top:525px;font:normal normal 10.1px/11px 'Liberation Sans', sans-serif;color:#000;letter-spacing:0.293px;">$100.00</span>
<span class="t" style="left:568.15px;top:525px;font:normal normal 10.1px/11px 'Liberation Sans', sans-serif;color:#000;letter-spacing:0.293px;">$100.00</span>
<span class="t" style="left:724.01px;top:525px;font:normal normal 10.1px/11px 'Liberation Sans', sans-serif;color:#000;letter-spacing:0.284px;">$0.00</span>
<span class="t" style="left:831.15px;top:525px;font:normal normal 10.1px/11px 'Liberation Sans', sans-serif;color:#000;letter-spacing:0.293px;">$100.00</span>
<span class="t" style="left:962.01px;top:525px;font:normal normal 10.1px/11px 'Liberation Sans', sans-serif;color:#000;letter-spacing:0.284px;">$0.00</span>
<span class="t" style="left:161.90px;top:542px;font:normal normal 9.7px/11px 'Liberation Sans', sans-serif;color:#000;letter-spacing:0.241px;">Corsages</span>
<span class="t" style="left:424.25px;top:542px;font:normal normal 10.1px/11px 'Liberation Sans', sans-serif;color:#000;letter-spacing:0.293px;">$100.00</span>
<span class="t" style="left:568.15px;top:542px;font:normal normal 10.1px/11px 'Liberation Sans', sans-serif;color:#000;letter-spacing:0.293px;">$100.00</span>
<span class="t" style="left:724.01px;top:542px;font:normal normal 10.1px/11px 'Liberation Sans', sans-serif;color:#000;letter-spacing:0.284px;">$0.00</span>
<span class="t" style="left:831.15px;top:542px;font:normal normal 10.1px/11px 'Liberation Sans', sans-serif;color:#000;letter-spacing:0.293px;">$100.00</span>
<span class="t" style="left:962.01px;top:542px;font:normal normal 10.1px/11px 'Liberation Sans', sans-serif;color:#000;letter-spacing:0.284px;">$0.00</span>
<span class="t" style="left:161.90px;top:559px;font:normal normal 9.7px/11px 'Liberation Sans', sans-serif;color:#000;letter-spacing:0.609px;">Boutonnieres</span>
<span class="t" style="left:430.19px;top:559px;font:normal normal 10.1px/11px 'Liberation Sans', sans-serif;color:#000;letter-spacing:0.289px;">$50.00</span>
<span class="t" style="left:574.09px;top:559px;font:normal normal 10.1px/11px 'Liberation Sans', sans-serif;color:#000;letter-spacing:0.289px;">$50.00</span>
<span class="t" style="left:724.01px;top:559px;font:normal normal 10.1px/11px 'Liberation Sans', sans-serif;color:#000;letter-spacing:0.284px;">$0.00</span>
<span class="t" style="left:837.09px;top:559px;font:normal normal 10.1px/11px 'Liberation Sans', sans-serif;color:#000;letter-spacing:0.289px;">$50.00</span>
<span class="t" style="left:962.01px;top:559px;font:normal normal 10.1px/11px 'Liberation Sans', sans-serif;color:#000;letter-spacing:0.284px;">$0.00</span>
<span class="t" style="left:161.90px;top:576px;font:normal normal 9.7px/11px 'Liberation Sans', sans-serif;color:#000;letter-spacing:0.527px;">Ceremony</span>
<span class="t" style="left:424.25px;top:576px;font:normal normal 10.1px/11px 'Liberation Sans', sans-serif;color:#000;letter-spacing:0.293px;">$300.00</span>
<span class="t" style="left:568.15px;top:576px;font:normal normal 10.1px/11px 'Liberation Sans', sans-serif;color:#000;letter-spacing:0.293px;">$250.00</span>
<span class="t" style="left:712.15px;top:576px;font:normal normal 10.1px/11px 'Liberation Sans', sans-serif;color:#000;letter-spacing:0.293px;">$200.00</span>
<span class="t" style="left:837.09px;top:576px;font:normal normal 10.1px/11px 'Liberation Sans', sans-serif;color:#000;letter-spacing:0.289px;">$50.00</span>
<span class="t" style="left:962.01px;top:576px;font:normal normal 10.1px/11px 'Liberation Sans', sans-serif;color:#000;letter-spacing:0.284px;">$0.00</span>
<span class="t" style="left:161.90px;top:593px;font:normal normal 9.7px/11px 'Liberation Sans', sans-serif;color:#000;letter-spacing:0.531px;">Reception</span>
<span class="t" style="left:424.25px;top:593px;font:normal normal 10.1px/11px 'Liberation Sans', sans-serif;color:#000;letter-spacing:0.293px;">$300.00</span>
<span class="t" style="left:568.15px;top:593px;font:normal normal 10.1px/11px 'Liberation Sans', sans-serif;color:#000;letter-spacing:0.293px;">$300.00</span>
<span class="t" style="left:712.15px;top:593px;font:normal normal 10.1px/11px 'Liberation Sans', sans-serif;color:#000;letter-spacing:0.293px;">$200.00</span>
<span class="t" style="left:831.15px;top:593px;font:normal normal 10.1px/11px 'Liberation Sans', sans-serif;color:#000;letter-spacing:0.293px;">$100.00</span>
<span class="t" style="left:962.01px;top:593px;font:normal normal 10.1px/11px 'Liberation Sans', sans-serif;color:#000;letter-spacing:0.284px;">$0.00</span>
<span class="t" style="left:161.90px;top:610px;font:normal normal 9.7px/11px 'Liberation Sans', sans-serif;color:#000;letter-spacing:0.646px;">Florist</span>
<span class="t" style="left:424.25px;top:610px;font:normal normal 10.1px/11px 'Liberation Sans', sans-serif;color:#000;letter-spacing:0.293px;">$100.00</span>
<span class="t" style="left:574.09px;top:610px;font:normal normal 10.1px/11px 'Liberation Sans', sans-serif;color:#000;letter-spacing:0.289px;">$50.00</span>
<span class="t" style="left:718.09px;top:610px;font:normal normal 10.1px/11px 'Liberation Sans', sans-serif;color:#000;letter-spacing:0.289px;">$50.00</span>
<span class="t" style="left:843.01px;top:610px;font:normal normal 10.1px/11px 'Liberation Sans', sans-serif;color:#000;letter-spacing:0.284px;">$0.00</span>
<span class="t" style="left:962.01px;top:610px;font:normal normal 10.1px/11px 'Liberation Sans', sans-serif;color:#000;letter-spacing:0.284px;">$0.00</span>
<span class="t" style="left:161.90px;top:627px;font:normal normal 9.7px/11px 'Liberation Sans', sans-serif;color:#000;letter-spacing:0.460px;">Floral Headpieces</span>
<span class="t" style="left:430.19px;top:627px;font:normal normal 10.1px/11px 'Liberation Sans', sans-serif;color:#000;letter-spacing:0.289px;">$50.00</span>
<span class="t" style="left:574.09px;top:627px;font:normal normal 10.1px/11px 'Liberation Sans', sans-serif;color:#000;letter-spacing:0.289px;">$50.00</span>
<span class="t" style="left:724.01px;top:627px;font:normal normal 10.1px/11px 'Liberation Sans', sans-serif;color:#000;letter-spacing:0.284px;">$0.00</span>
<span class="t" style="left:837.09px;top:627px;font:normal normal 10.1px/11px 'Liberation Sans', sans-serif;color:#000;letter-spacing:0.289px;">$50.00</span>
<span class="t" style="left:962.01px;top:627px;font:normal normal 10.1px/11px 'Liberation Sans', sans-serif;color:#000;letter-spacing:0.284px;">$0.00</span>
<span class="t" style="left:162.40px;top:649px;font:normal bold 12px/14px 'Liberation Sans', sans-serif;color:#389fc1;letter-spacing:0.464px;">Total</span>
<span class="t" style="left:415.35px;top:649px;font:normal normal 10.3px/11px 'Liberation Sans', sans-serif;color:#000;letter-spacing:0.182px;">$1,000.00</span>
<span class="t" style="left:568.14px;top:649px;font:normal normal 10.3px/11px 'Liberation Sans', sans-serif;color:#000;letter-spacing:0.190px;">$900.00</span>
<span class="t" style="left:712.14px;top:649px;font:normal normal 10.3px/11px 'Liberation Sans', sans-serif;color:#000;letter-spacing:0.190px;">$450.00</span>
<span class="t" style="left:831.14px;top:649px;font:normal normal 10.3px/11px 'Liberation Sans', sans-serif;color:#000;letter-spacing:0.190px;">$450.00</span>
<span class="t" style="left:962.00px;top:649px;font:normal normal 10.3px/11px 'Liberation Sans', sans-serif;color:#000;letter-spacing:0.184px;">$0.00</span>
<svg class="a" style="left:467px;top:648px" width="13" height="12" viewBox="0 0 13 12"><path d="M.5 6.200l2.500-1.700 1.700 2.200Q7.400 2.800 10.800 .3l1.300 1.200Q8.300 5 5.600 10.600l-1.800.2Q2.500 8.200 .5 6.200z" fill="#4fae55" stroke="#2f8538" stroke-width=".7"/></svg>
<svg class="a" style="left:610.7px;top:648px" width="13" height="12" viewBox="0 0 13 12"><path d="M.5 6.200l2.500-1.700 1.700 2.200Q7.400 2.800 10.800 .3l1.300 1.200Q8.300 5 5.600 10.600l-1.800.2Q2.500 8.200 .5 6.200z" fill="#4fae55" stroke="#2f8538" stroke-width=".7"/></svg>
<span class="t" style="left:61.90px;top:649px;font:normal normal 10.3px/11px 'Liberation Sans', sans-serif;color:#000;letter-spacing:0.232px;">$1,000.00</span>
</div></body></html>
